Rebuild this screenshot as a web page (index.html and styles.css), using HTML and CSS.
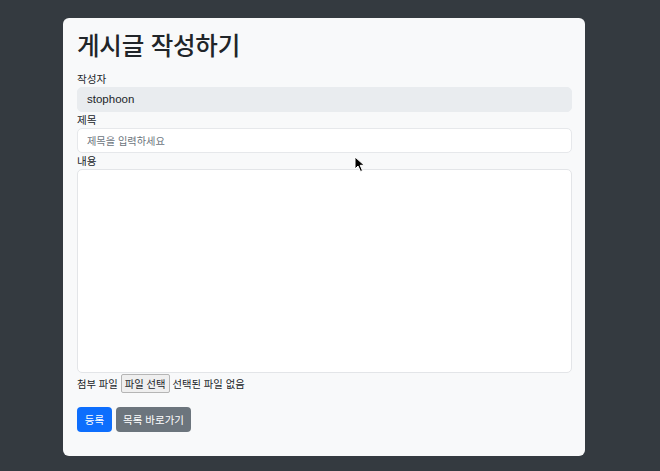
FILE: index.html
```html
<!DOCTYPE html>
<html lang="ko">
<head>
<meta charset="utf-8">
<title>게시글 작성하기</title>
<link rel="stylesheet" href="styles.css">
</head>
<body>
<div class="card">
  <h1 class="title">게시글 작성하기</h1>
  <form class="form">
    <label class="label">작성자</label>
    <div class="input readonly">stophoon</div>
    <label class="label">제목</label>
    <div class="input placeholder">제목을 입력하세요</div>
    <label class="label">내용</label>
    <div class="textarea"></div>
    <div class="file-row">
      <span>첨부 파일</span>
      <span class="file-btn">파일 선택</span>
      <span>선택된 파일 없음</span>
    </div>
    <div class="actions">
      <span class="btn primary">등록</span>
      <span class="btn secondary">목록 바로가기</span>
    </div>
  </form>
</div>
<svg class="cursor" width="12" height="17" viewBox="0 0 12 17">
  <path d="M1 1 L1 13 L4 10 L6.5 15.5 L8.5 14.6 L6.2 9.3 L10.3 9.3 Z" fill="#000" stroke="#fff" stroke-width="1"/>
</svg>
</body>
</html>
```
FILE: styles.css
```css
html, body {
  margin: 0;
  padding: 0;
}
body {
  background: #343a40;
  font-family: "Liberation Sans", "Noto Sans CJK KR", sans-serif;
  color: #212529;
  height: 471px;
  overflow: hidden;
  padding-top: 18px;
  box-sizing: border-box;
}
.card {
  margin-left: 63px;
  width: 522px;
  height: 438px;
  box-sizing: border-box;
  background: #f8f9fa;
  border-radius: 6px;
  padding: 12px 13px 0 14px;
}
.title {
  margin: 0 0 11px 0;
  font-family: "Noto Sans CJK KR", sans-serif;
  font-size: 24.5px;
  font-weight: 500;
  line-height: 30px;
  letter-spacing: -0.2px;
}
.form {
  display: flex;
  flex-direction: column;
}
.label {
  font-family: "Noto Sans CJK KR", sans-serif;
  font-size: 10.6px;
  line-height: 15px;
  margin-bottom: 1px;
}
.input {
  height: 25px;
  box-sizing: border-box;
  border: 1px solid #e6e8eb;
  border-radius: 5px;
  background: #fff;
  padding: 0 9px;
  font-size: 11.5px;
  line-height: 23px;
}
.readonly {
  background: #e9ecef;
  border-color: #e9ecef;
  color: #212529;
}
.placeholder {
  font-family: "Noto Sans CJK KR", sans-serif;
  color: #6c757d;
  font-size: 10.2px;
}
.textarea {
  height: 204px;
  box-sizing: border-box;
  border: 1px solid #e3e5e8;
  border-radius: 5px;
  background: #fff;
}
.file-row {
  display: flex;
  align-items: center;
  gap: 3px;
  height: 20px;
  font-family: "Noto Sans CJK KR", sans-serif;
  font-size: 10.3px;
}
.file-btn {
  height: 19px;
  box-sizing: border-box;
  padding: 0 3px;
  border: 1px solid #b5b5b5;
  border-radius: 2px;
  background: #efefef;
  line-height: 17px;
}
.actions {
  display: flex;
  gap: 4px;
  margin-top: 14px;
}
.btn {
  height: 25px;
  box-sizing: border-box;
  border-radius: 4px;
  color: #fff;
  font-family: "Noto Sans CJK KR", sans-serif;
  font-size: 10.5px;
  line-height: 25px;
  text-align: center;
}
.primary {
  background: #0d6efd;
  width: 35px;
}
.secondary {
  background: #6c757d;
  width: 75px;
}
.cursor {
  position: absolute;
  left: 354px;
  top: 156px;
}
```
